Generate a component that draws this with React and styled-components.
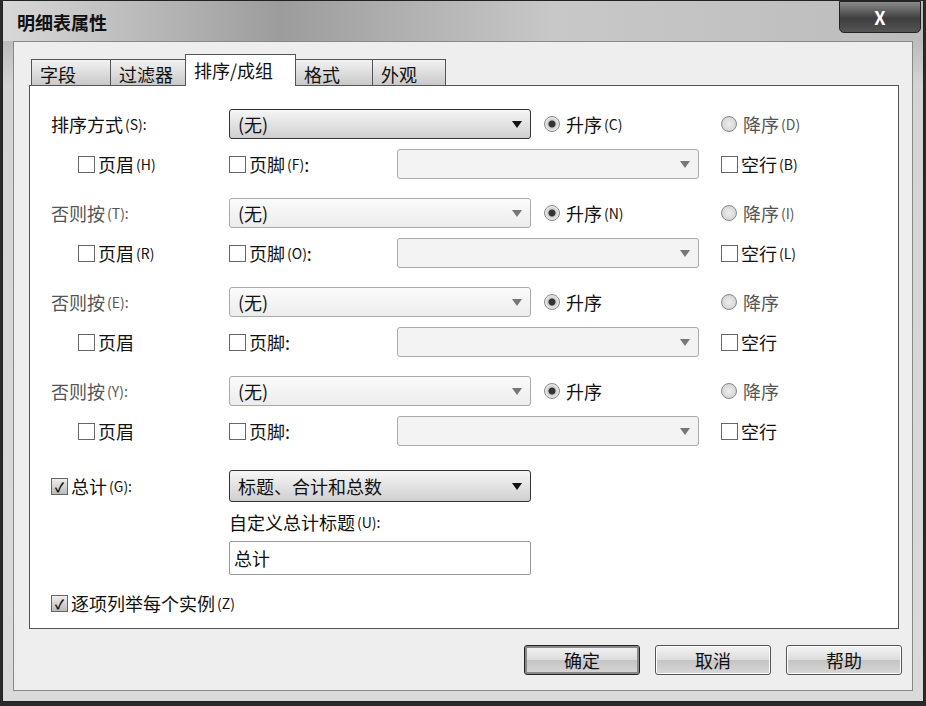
import React from 'react'
import styled, { createGlobalStyle } from 'styled-components'

const Global = createGlobalStyle`
  html, body { margin: 0; padding: 0; background: #2a2a2a; }
  body { font-family: "Noto Sans CJK SC", "Liberation Sans", sans-serif; color: #111; }
`

const Window = styled.div`
  width: 922px;
  height: 702px;
  margin: 0 2px;
  border: 1px solid #222;
  border-radius: 6px 6px 0 0;
  background: linear-gradient(180deg, #cfcfcf 0%, #bdbdbd 6%, #d4d4d4 12%, #dadada 100%);
  display: flex;
  flex-direction: column;
  box-sizing: border-box;
`

const TitleBar = styled.div`
  height: 40px;
  display: flex;
  align-items: flex-start;
  justify-content: space-between;
  padding: 8px 0 0 14px;
  box-sizing: border-box;
  background: linear-gradient(90deg, #d8d8d8 0%, #9c9c9c 30%, #c8c8c8 60%, #bcbcbc 100%);
`

const Title = styled.div`
  font-size: 18px;
  font-weight: 600;
`

const CloseBtn = styled.div`
  width: 80px;
  height: 30px;
  margin-top: -8px;
  margin-right: 2px;
  border: 1px solid #222;
  border-radius: 0 0 5px 5px;
  background: linear-gradient(180deg, #8a8a8a, #3e3e3e 55%, #555);
  color: #fff;
  font-weight: 700;
  font-size: 18px;
  display: flex;
  align-items: center;
  justify-content: center;
`

const Client = styled.div`
  flex: 1;
  margin: 0 10px 10px 10px;
  background: #eeeeee;
  border: 1px solid #888;
  display: flex;
  flex-direction: column;
  padding: 12px 10px 0 15px;
`

const Tabs = styled.div`
  display: flex;
  align-items: flex-end;
  height: 32px;
  padding-left: 2px;
`

const Tab = styled.div`
  width: ${p => p.$w}px;
  box-sizing: border-box;
  height: ${p => (p.$active ? 32 : 27)}px;
  padding: 0 8px;
  margin-right: -1px;
  border: 1px solid #555;
  border-bottom: ${p => (p.$active ? 'none' : '1px solid #555')};
  background: ${p => (p.$active ? '#fff' : 'linear-gradient(180deg, #f2f2f2, #c9c9c9)')};
  font-size: 18px;
  line-height: ${p => (p.$active ? 30 : 28)}px;
  position: relative;
  z-index: ${p => (p.$active ? 2 : 1)};
`

const Panel = styled.div`
  width: 870px;
  height: 544px;
  margin-top: -1px;
  background: #fff;
  border: 1px solid #555;
  box-sizing: border-box;
  padding: 20px 0 0 21px;
  display: flex;
  flex-direction: column;
`

const Row = styled.div`
  display: flex;
  align-items: center;
  box-sizing: border-box;
  height: ${p => p.$h || 40}px;
  padding-left: ${p => p.$indent || 0}px;
  padding-bottom: ${p => p.$pb || 0}px;
`

const Cell = styled.div`
  width: ${p => p.$w}px;
  flex: none;
  display: flex;
  align-items: center;
  font-size: 18px;
  color: ${p => (p.$dim ? '#555' : '#111')};
`

const Key = styled.span`
  font-size: 14px;
  margin-left: 2px;
`

const Combo = styled.div`
  width: ${p => p.$w || 302}px;
  height: ${p => p.$h || 30}px;
  box-sizing: border-box;
  border: 1px solid ${p => (p.$strong ? '#333' : '#aaa')};
  border-radius: 3px;
  background: ${p => (p.$strong ? 'linear-gradient(180deg,#f6f6f6,#cfcfcf)' : p.$empty ? '#f3f3f3' : 'linear-gradient(180deg,#fbfbfb,#ececec)')};
  display: flex;
  align-items: center;
  justify-content: space-between;
  padding: 0 8px 0 8px;
  font-size: 18px;
  margin-right: ${p => p.$mr || 0}px;
`

const Arrow = styled.span`
  width: 0;
  height: 0;
  border-left: 5px solid transparent;
  border-right: 5px solid transparent;
  border-top: 7px solid ${p => (p.$dim ? '#777' : '#111')};
`

const Radio = styled.span`
  width: 16px;
  height: 16px;
  border-radius: 50%;
  border: 1px solid #888;
  background: ${p => (p.$on ? 'radial-gradient(circle, #333 0 3px, #ccc 4px, #eee 7px)' : 'radial-gradient(circle, #eee, #ccc)')};
  margin-right: 6px;
  box-sizing: border-box;
`

const Box = styled.span`
  width: 17px;
  height: 17px;
  border: 1px solid #666;
  background: ${p => (p.$on ? 'linear-gradient(180deg,#eee,#bbb)' : '#fff')};
  margin-right: 3px;
  box-sizing: border-box;
  display: flex;
  align-items: center;
  justify-content: center;
  font-size: 13px;
  font-weight: 700;
  line-height: 1;
`

const Input = styled.div`
  width: 302px;
  height: 34px;
  box-sizing: border-box;
  border: 1px solid #999;
  border-radius: 2px;
  padding: 0 4px;
  font-size: 18px;
  display: flex;
  align-items: center;
`

const Footer = styled.div`
  flex: 1;
  display: flex;
  justify-content: flex-end;
  align-items: center;
  gap: 15px;
`

const Button = styled.div`
  width: 116px;
  height: 30px;
  box-sizing: border-box;
  border: 1px solid ${p => (p.$def ? '#222' : '#555')};
  border-radius: 3px;
  background: linear-gradient(180deg, #f4f4f4 0%, #dcdcdc 50%, #c4c4c4 51%, #d8d8d8 100%);
  box-shadow: ${p => (p.$def ? 'inset 0 0 0 2px #888' : 'inset 0 0 0 1px #fff')};
  display: flex;
  align-items: center;
  justify-content: center;
  font-size: 18px;
`

const SortBlock = ({ label, k, up, down, head, foot, blank, main }) => (
  <>
    <Row $h={36}>
      <Cell $w={178} $dim={!main}>{label}<Key>({k}):</Key></Cell>
      <Combo $strong={main} $mr={13}>(无)<Arrow $dim={!main} /></Combo>
      <Cell $w={177}><Radio $on />升序{up && <Key>({up})</Key>}</Cell>
      <Cell $w={150} $dim><Radio />降序{down && <Key>({down})</Key>}</Cell>
    </Row>
    <Row $indent={27} $h={53} $pb={9}>
      <Cell $w={151}><Box />页眉{head && <Key>({head})</Key>}</Cell>
      <Cell $w={168}><Box />页脚{foot && <Key>({foot})</Key>}:</Cell>
      <Combo $empty $mr={22}><span /><Arrow $dim /></Combo>
      <Cell $w={120}><Box />空行{blank && <Key>({blank})</Key>}</Cell>
    </Row>
  </>
)

export default function App() {
  return (
    <>
      <Global />
      <Window>
        <TitleBar>
          <Title>明细表属性</Title>
          <CloseBtn>X</CloseBtn>
        </TitleBar>
        <Client>
          <Tabs>
            <Tab $w={80}>字段</Tab>
            <Tab $w={76}>过滤器</Tab>
            <Tab $w={111} $active>排序/成组</Tab>
            <Tab $w={78}>格式</Tab>
            <Tab $w={74}>外观</Tab>
          </Tabs>
          <Panel>
            <SortBlock main label="排序方式" k="S" up="C" down="D" head="H" foot="F" blank="B" />
            <SortBlock label="否则按" k="T" up="N" down="I" head="R" foot="O" blank="L" />
            <SortBlock label="否则按" k="E" />
            <SortBlock label="否则按" k="Y" />
            <Row $h={48}>
              <Cell $w={178}><Box $on>✓</Box>总计<Key>(G):</Key></Cell>
              <Combo $strong $h={32}>标题、合计和总数<Arrow /></Combo>
            </Row>
            <Row $h={24} $indent={178}>
              <Cell $w={300}>自定义总计标题<Key>(U):</Key></Cell>
            </Row>
            <Row $h={48} $indent={178}>
              <Input>总计</Input>
            </Row>
            <Row $h={42}>
              <Cell $w={400}><Box $on>✓</Box>逐项列举每个实例<Key>(Z)</Key></Cell>
            </Row>
          </Panel>
          <Footer>
            <Button $def>确定</Button>
            <Button>取消</Button>
            <Button>帮助</Button>
          </Footer>
        </Client>
      </Window>
    </>
  )
}
